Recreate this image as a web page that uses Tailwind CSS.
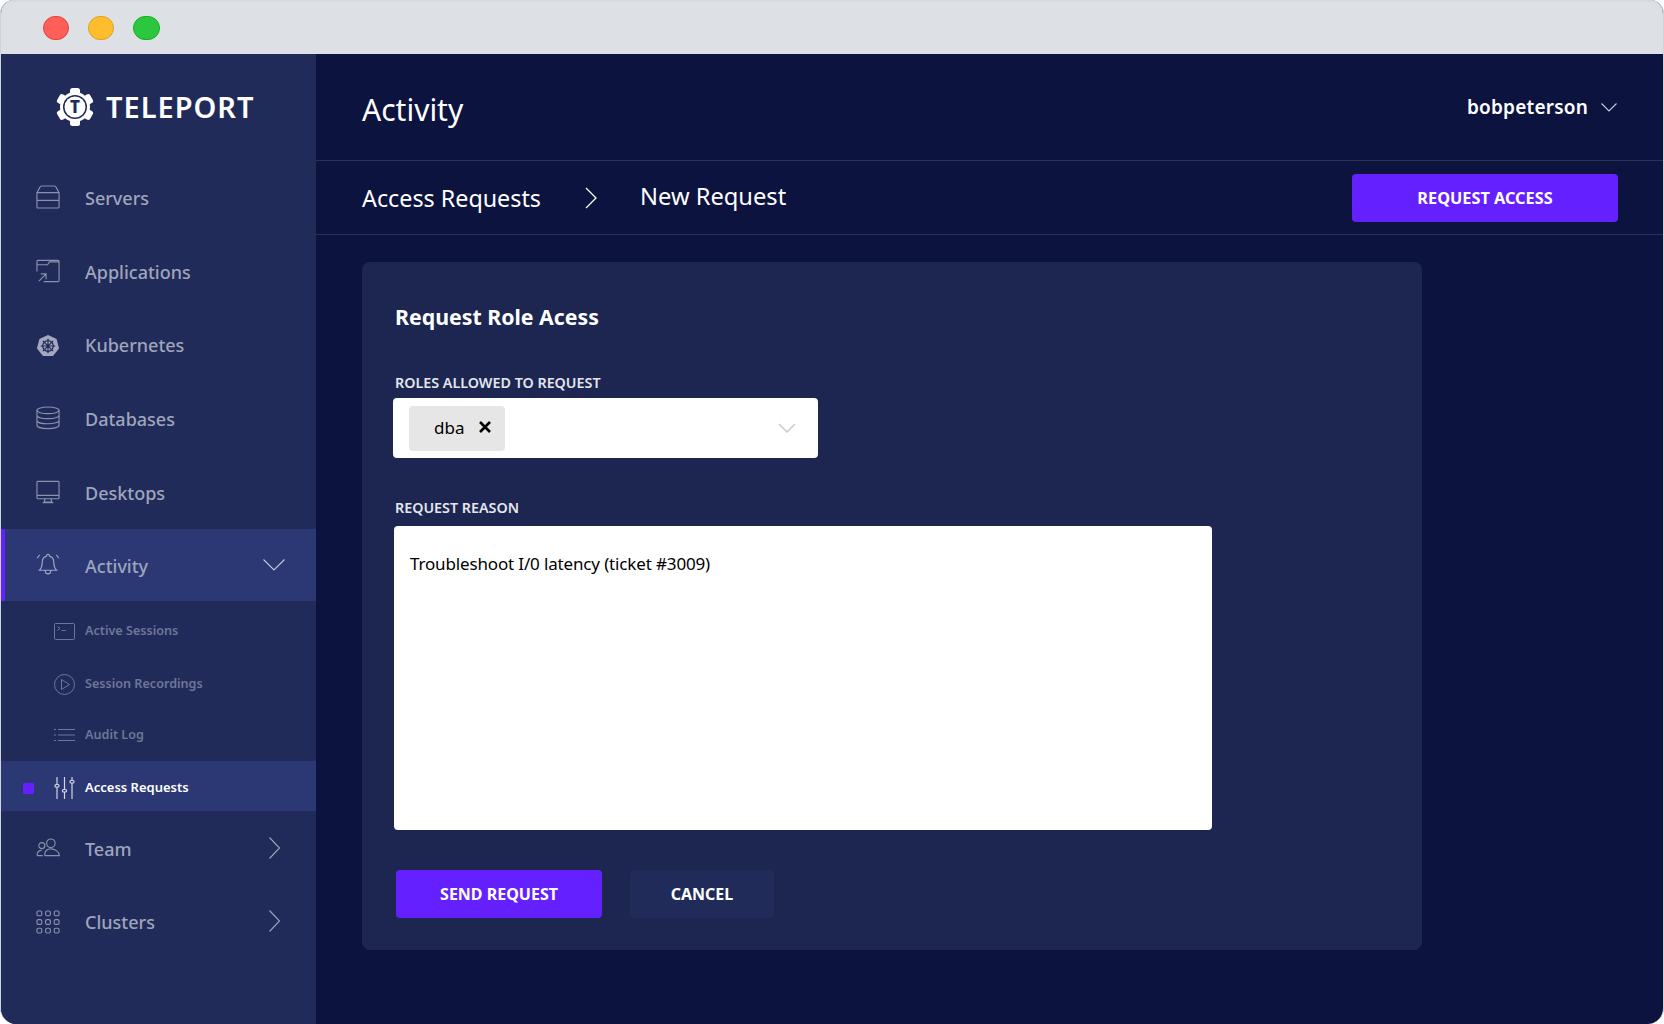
<!DOCTYPE html>
<html lang="en">
<head>
    <meta charset="UTF-8">
    <title>Teleport - New Request</title>
    <script src="https://cdn.jsdelivr.net/npm/@tailwindcss/browser@4"></script>
</head>
<body class="bg-white h-[1024px] w-[1664px] overflow-hidden font-['Noto_Sans',sans-serif]">
    <div class="h-[1024px] w-[1664px] flex flex-col rounded-t-[14px] rounded-b-[16px] overflow-hidden border-l border-r border-[#cfd4d8] bg-[#0b133e]">
        <!-- title bar -->
        <div class="h-[54px] shrink-0 bg-[#dde1e5] border-t-2 border-[#d5dcdf] flex items-center pl-[42px] gap-[19px]">
            <span class="w-[26px] h-[24px] rounded-full bg-[#ff5f57] border border-[#e0443e]"></span>
            <span class="w-[26px] h-[24px] rounded-full bg-[#ffbd2e] border border-[#dea123]"></span>
            <span class="w-[27px] h-[24px] rounded-full bg-[#2ac73f] border border-[#1aab29]"></span>
        </div>

        <div class="flex flex-1 min-h-0">
            <!-- sidebar -->
            <aside class="w-[315px] shrink-0 bg-[#212b59] flex flex-col">
                <div class="h-[107px] shrink-0 flex items-center pl-[55px] pb-[2px] gap-[12px]">
                    <svg width="38" height="40" viewBox="0 0 38 40" fill="#fff">
                        <g>
                            <rect x="14" y="1" width="10" height="38" rx="2.5"/>
                            <rect x="14" y="1" width="10" height="38" rx="2.5" transform="rotate(60 19 20)"/>
                            <rect x="14" y="1" width="10" height="38" rx="2.5" transform="rotate(120 19 20)"/>
                        </g>
                        <circle cx="19" cy="20" r="15"/>
                        <circle cx="19" cy="20" r="12" fill="#212b59"/>
                        <circle cx="19" cy="20" r="10.5"/>
                        <text x="19" y="26" text-anchor="middle" font-size="17" font-weight="800" fill="#212b59" font-family="Noto Sans">T</text>
                    </svg>
                    <span class="text-white text-[29px] tracking-[1px] leading-none font-semibold">TELEPORT</span>
                </div>

                <nav class="flex flex-col text-[18px] font-medium text-[#9fa5bd]">
                    <a class="h-[74px] flex items-center pl-[35px] gap-[25px]">
                        <svg class="w-[24px] h-[24px] mb-[2px] text-[#8a90ad]" viewBox="0 0 25 25" fill="none" stroke="currentColor" stroke-width="1.2"><path d="M1 8 4 2.500Q4.500 1 6 1h13q1.500 0 2 1.500L24 8M1 8h23v15a1 1 0 0 1-1 1H2a1 1 0 0 1-1-1zM1 16h23"/></svg>
                        <span>Servers</span>
                    </a>
                    <a class="h-[74px] flex items-center pl-[35px] gap-[25px]">
                        <svg class="w-[24px] h-[24px] mb-[2px] text-[#8a90ad]" viewBox="0 0 25 25" fill="none" stroke="currentColor" stroke-width="1.2"><path d="M2 1.500h21a1 1 0 0 1 1 1v20a1 1 0 0 1-1 1H8M1 13V2.500a1 1 0 0 1 1-1M1 6h11l2-3h10M3 23l7-7M5 15.500h5.500V21"/></svg>
                        <span>Applications</span>
                    </a>
                    <a class="h-[73px] flex items-center pl-[35px] gap-[25px]">
                        <svg class="w-[24px] h-[24px]" viewBox="0 0 25 25"><path d="M12.500 1 21.500 5.300 24 15 17.700 23H7.300L1 15 3.500 5.300z" fill="#a3a8bf"/><g fill="none" stroke="#212b59" stroke-width="1.300"><circle cx="12.500" cy="12.500" r="5.500"/><path d="M12.500 5v15M5 12.500h15M7.200 7.200l10.600 10.600M17.800 7.200 7.200 17.800"/></g></svg>
                        <span>Kubernetes</span>
                    </a>
                    <a class="h-[74px] flex items-center pl-[35px] gap-[25px]">
                        <svg class="w-[24px] h-[24px] mb-[2px] text-[#8a90ad]" viewBox="0 0 25 25" fill="none" stroke="currentColor" stroke-width="1.2"><ellipse cx="12.500" cy="4.500" rx="11.500" ry="3.500"/><path d="M1 4.500v15.500c0 2 5 3.500 11.500 3.500S24 22 24 20V4.500M1 9.700c0 2 5 3.500 11.500 3.500S24 11.700 24 9.700M1 15c0 2 5 3.500 11.500 3.500S24 17 24 15"/></svg>
                        <span>Databases</span>
                    </a>
                    <a class="h-[74px] flex items-center pl-[35px] gap-[25px]">
                        <svg class="w-[24px] h-[24px] mb-[2px] text-[#8a90ad]" viewBox="0 0 25 25" fill="none" stroke="currentColor" stroke-width="1.2"><rect x="1" y="1.500" width="23" height="18" rx="1"/><path d="M1 16h23M9.500 19.500l-1 3.500h8l-1-3.500M7 23.500h11"/></svg>
                        <span>Desktops</span>
                    </a>

                    <a class="h-[72px] flex items-center pl-[31px] pt-[3px] gap-[25px] bg-[#2b3873] border-l-4 border-[#6520ff] mt-[-1px]">
                        <svg class="w-[24px] h-[24px] mb-[3px] text-[#9fa5bd]" viewBox="0 0 25 25" fill="none" stroke="currentColor" stroke-width="1.2"><path d="M12.500 1.500a1.500 1.500 0 0 1 1.500 1.800c3 .8 4.500 3.200 4.500 6.500 0 4 1 6 3 8.200H3.500c2-2.200 3-4.200 3-8.200 0-3.300 1.500-5.700 4.500-6.500a1.500 1.500 0 0 1 1.500-1.800zM9.500 18c0 5 6 5 6 0M1.500 5.500C1.800 4 2.500 3 4 2M23.500 5.500C23.200 4 22.500 3 21 2"/></svg>
                        <span class="flex-1">Activity</span>
                        <svg class="w-[22px] h-[12px] mb-[3px] mr-[31px] text-[#c5c9d8]" viewBox="0 0 22 12" fill="none" stroke="currentColor" stroke-width="1.100"><path d="M.5.500 11 11 21.500.500"/></svg>
                    </a>

                    <div class="flex flex-col text-[12.600px] font-semibold text-[#6f7699]">
                        <a class="h-[55px] flex items-center pl-[53px] gap-[10px] pt-[5px]">
                            <svg class="w-[21px] h-[17px] text-[#6f7699]" viewBox="0 0 21 17" fill="none" stroke="currentColor" stroke-width="1"><rect x=".5" y=".5" width="20" height="16" rx="1"/><path d="M3.500 3.500 6 5.500 3.500 7.500M7.500 7.500h4"/></svg>
                            <span>Active Sessions</span>
                        </a>
                        <a class="h-[53px] flex items-center pl-[53px] gap-[10px] pt-[3px]">
                            <svg class="w-[21px] h-[21px] text-[#6f7699]" viewBox="0 0 21 21" fill="none" stroke="currentColor" stroke-width="1"><circle cx="10.500" cy="10.500" r="10"/><path d="M7.500 5.500v10l8-5z"/></svg>
                            <span>Session Recordings</span>
                        </a>
                        <a class="h-[52px] flex items-center pl-[53px] gap-[10px]">
                            <svg class="w-[21px] h-[14px] text-[#6f7699]" viewBox="0 0 21 14" fill="none" stroke="currentColor" stroke-width="1"><path d="M4 1.500h17M4 7h17M4 12.500h17M0 1.500h2M0 7h2M0 12.500h2"/></svg>
                            <span>Audit Log</span>
                        </a>
                        <a class="h-[50px] flex items-center pl-[22px] pt-[4px] bg-[#2b3873] text-white text-[13px]">
                            <span class="w-[11px] h-[11px] bg-[#6520ff] rounded-[1px] mr-[20px]"></span>
                            <svg class="w-[21px] h-[22px] text-[#d3d6e2] mr-[10px]" viewBox="0 0 21 22" fill="none" stroke="currentColor" stroke-width="1.200"><path d="M3 0v7M3 10v12M10.500 0v12M10.500 15v7M18 0v3M18 6v16"/><rect x="1" y="7.500" width="4" height="2.500" rx="1"/><rect x="8.500" y="12.500" width="4" height="2.500" rx="1"/><rect x="16" y="3.500" width="4" height="2.500" rx="1"/></svg>
                            <span>Access Requests</span>
                        </a>
                    </div>

                    <a class="h-[74px] flex items-center pl-[35px] pt-[2px] gap-[25px]">
                        <svg class="w-[24px] h-[19px] mb-[3px] text-[#8a90ad]" viewBox="0 0 25 20" fill="none" stroke="currentColor" stroke-width="1.2"><circle cx="15.500" cy="5.500" r="4.500"/><path d="M9 18c0-4 2.500-6.500 6.500-6.500S24 14 24.500 18.500H9.500z"/><circle cx="6" cy="8" r="3.200"/><path d="M1 18.500C1 15 3 13 5.800 13M1 18.500h6"/></svg>
                        <span class="flex-1">Team</span>
                        <svg class="w-[11px] h-[22px] mb-[3px] mr-[36px] text-[#9fa5bd]" viewBox="0 0 11 22" fill="none" stroke="currentColor" stroke-width="1.100"><path d="M.5.500 10.500 11 .5 21.500"/></svg>
                    </a>
                    <a class="h-[73px] flex items-center pl-[35px] pt-[1px] gap-[25px]">
                        <svg class="w-[24px] h-[24px] text-[#8a90ad]" viewBox="0 0 25 25" fill="none" stroke="currentColor" stroke-width="1.200"><rect x="1" y="1" width="5" height="5" rx="1.500"/><rect x="10" y="1" width="5" height="5" rx="1.500"/><rect x="19" y="1" width="5" height="5" rx="1.500"/><rect x="1" y="10" width="5" height="5" rx="1.500"/><rect x="10" y="10" width="5" height="5" rx="1.500"/><rect x="19" y="10" width="5" height="5" rx="1.500"/><rect x="1" y="19" width="5" height="5" rx="1.500"/><rect x="10" y="19" width="5" height="5" rx="1.500"/><rect x="19" y="19" width="5" height="5" rx="1.500"/></svg>
                        <span class="flex-1">Clusters</span>
                        <svg class="w-[11px] h-[22px] mb-[2px] mr-[36px] text-[#9fa5bd]" viewBox="0 0 11 22" fill="none" stroke="currentColor" stroke-width="1.100"><path d="M.5.500 10.500 11 .5 21.500"/></svg>
                    </a>
                </nav>
            </aside>

            <!-- main -->
            <main class="flex-1 flex flex-col min-w-0 text-white">
                <header class="h-[107px] shrink-0 border-b border-[#2a3156] flex items-center justify-between pl-[46px] pr-[46px]">
                    <h1 class="text-[30px] font-normal pt-[4px]">Activity</h1>
                    <div class="flex items-center gap-[13px] text-[19px] tracking-[0.2px] font-semibold">
                        <span>bobpeterson</span>
                        <svg class="w-[16px] h-[9px] text-[#c5c9d8]" viewBox="0 0 16 9" fill="none" stroke="currentColor" stroke-width="1.100"><path d="M.5.500 8 8 15.500.500"/></svg>
                    </div>
                </header>
                <div class="h-[74px] shrink-0 border-b border-[#2a3156] flex items-center pl-[46px] pr-[45px]">
                    <span class="text-[23.300px] w-[178px] whitespace-nowrap pt-[2px]">Access Requests</span>
                    <svg class="w-[12px] h-[22px] ml-[45px] text-white" viewBox="0 0 12 22" fill="none" stroke="currentColor" stroke-width="1.300"><path d="M1 1 11 11 1 21"/></svg>
                    <span class="text-[23.700px] ml-[43px] flex-1 pb-[1px]">New Request</span>
                    <button class="w-[266px] h-[48px] bg-[#6520ff] rounded-[4px] text-[16.300px] font-bold pt-[2px]">REQUEST ACCESS</button>
                </div>
                <div class="pt-[27px] pl-[46px]">
                    <section class="w-[1060px] h-[688px] bg-[#1c2650] rounded-[8px] pl-[33px] pt-[39px]">
                        <h2 class="text-[21.300px] font-bold leading-[32px]">Request Role Acess</h2>
                        <label class="block mt-[40px] text-[14.300px] font-semibold text-[#e4e6ee] leading-[20px]">ROLES ALLOWED TO REQUEST</label>
                        <div class="ml-[-2px] mt-[5px] w-[425px] h-[60px] bg-white rounded-[4px] flex items-center pl-[16px] pr-[22px] text-black">
                            <div class="w-[96px] h-[45px] bg-[#e6e6e6] rounded-[4px] flex items-center pl-[25px]">
                                <span class="text-[17px]">dba</span>
                                <svg class="w-[12px] h-[12px] ml-[15px] mb-[2px]" viewBox="0 0 12 12" fill="none" stroke="#000" stroke-width="2.600"><path d="M1 1l10 10M11 1 1 11"/></svg>
                            </div>
                            <svg class="w-[18px] h-[10px] ml-auto text-[#c9c9c9]" viewBox="0 0 18 10" fill="none" stroke="currentColor" stroke-width="1.500"><path d="M1 1l8 8 8-8"/></svg>
                        </div>
                        <label class="block mt-[40px] text-[14.300px] font-semibold text-[#e4e6ee] leading-[20px]">REQUEST REASON</label>
                        <textarea class="block ml-[-1px] mt-[8px] w-[818px] h-[304px] bg-white rounded-[4px] resize-none text-black text-[17px] tracking-[-0.15px] leading-[26px] pl-[16px] pt-[25px]">Troubleshoot I/0 latency (ticket #3009)</textarea>
                        <div class="flex mt-[40px] gap-[28px]">
                            <button class="w-[206px] h-[48px] ml-[1px] bg-[#6520ff] rounded-[4px] text-[16px] font-bold">SEND REQUEST</button>
                            <button class="w-[144px] h-[48px] bg-[#212b59] rounded-[4px] text-[16px] font-bold">CANCEL</button>
                        </div>
                    </section>
                </div>
            </main>
        </div>
    </div>
</body>
</html>
